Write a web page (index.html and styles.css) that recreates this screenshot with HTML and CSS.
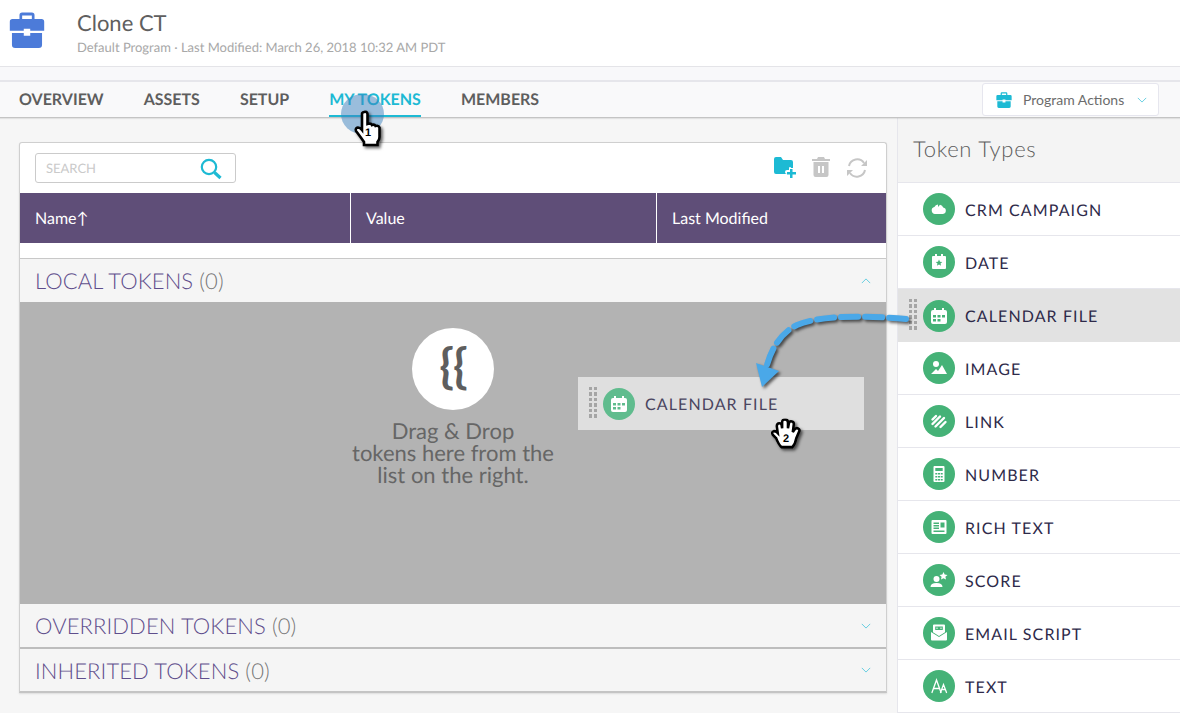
FILE: index.html
```html
<!DOCTYPE html>
<html lang="en">
<head>
  <meta charset="UTF-8">
  <title>Clone CT</title>
  <link rel="stylesheet" href="styles.css">
</head>
<body>

  <svg class="defs" width="0" height="0">
    <symbol id="case" viewBox="2 1.500 32 33.500">
      <path d="M11 8V4.500Q11 2 13.500 2h9Q25 2 25 4.500V8h-2.500V4.700h-9V8z"/>
      <path d="M2 10.500Q2 8 4.500 8h27Q34 8 34 10.500V19H21v-2h-6v2H2z"/>
      <path d="M4 21h11v2.500h6V21h11v11q0 3-3 3H7q-3 0-3-3z"/>
    </symbol>
    <symbol id="cal" viewBox="0 0 20 20">
      <path fill-rule="evenodd" d="M4 4h1V2h2v2h6V2h2v2h1q2 0 2 2v10q0 2-2 2H4q-2 0-2-2V6q0-2 2-2zm0 5v2.500h3V9zm4.500 0v2.500h3V9zm4.500 0v2.500h3V9zm-9 4v2.500h3V13zm4.500 0v2.500h3V13z"/>
    </symbol>
    <symbol id="hand" viewBox="0 0 30 38">
      <path d="M10 2q3-1 3.500 2v10l1.500-.5q2.500 0 3 1.500 2.500-1 3.500 1 3-1 4 1.500V27q0 3-2 5v3H10v-3q-2-3-5-7l-3-4q-1-3 2-3.500 2 0 4 2.500V4q0-1.500 2-2z"/>
    </symbol>
    <symbol id="palm" viewBox="0 0 34 34">
      <path d="M6 20l-3-3q-2-3 1-4 2 0 3 1l1 1-1-7q0-3 2.500-3T12 7l.5 3V4q0-3 3-3t3 3v6l1-5q.5-2.500 3-2 2.500.5 2 3l-1 8 2-3q2-2 3.500-.5 2 1 1 3l-3 7q-1 6-4 9H12q-3-2-6-10z"/>
    </symbol>
  </svg>

  <header class="top">
    <svg class="top-icon"><use href="#case"/></svg>
    <div>
      <h1>Clone CT</h1>
      <p>Default Program · Last Modified: March 26, 2018 10:32 AM PDT</p>
    </div>
  </header>

  <div class="strip"></div>

  <nav class="tabs">
    <a>OVERVIEW</a>
    <a>ASSETS</a>
    <a>SETUP</a>
    <a class="active">MY TOKENS</a>
    <a>MEMBERS</a>
    <button class="actions">
      <svg class="actions-icon"><use href="#case"/></svg>
      Program Actions
      <svg class="chev" viewBox="0 0 12 7"><path d="M1 1l5 5 5-5"/></svg>
    </button>
  </nav>

  <main class="main">
    <section class="content">
      <div class="card">
        <div class="toolbar">
          <div class="search">
            <span>SEARCH</span>
            <svg viewBox="0 0 22 22" width="22" height="22"><circle cx="9" cy="9" r="7.200"/><path d="M14.500 14.500l6 5.500"/></svg>
          </div>
          <div class="tools">
            <svg viewBox="0 0 22 21" width="22" height="21"><path class="blue" d="M0 2q0-2 2-2h5l2 3h8q2 0 2 2v6h-2a1 1 0 0 0-2 0v2h-2a2 2 0 0 0 0 4H2q-2 0-2-2z"/><path class="blue" d="M16 12h2.500v3H22v2.500h-3.500V21H16v-3.500h-3V15h3z"/></svg>
            <svg viewBox="0 0 18 20" width="18" height="20"><path class="grey" d="M0 2h5l1-2h6l1 2h5v2H0z"/><path class="grey" d="M1.500 5h15v13q0 2-2 2h-11q-2 0-2-2zM6 9v7h2V9zm4 0v7h2V9z" fill-rule="evenodd"/></svg>
            <svg class="refresh" viewBox="0 0 22 22" width="22" height="22"><path d="M3 9a8.300 8.300 0 0 1 15-3"/><path d="M19 13a8.300 8.300 0 0 1-15 3"/><path class="grey" d="M21 3v6h-6zM1 19v-6h6z"/></svg>
          </div>
        </div>

        <div class="thead">
          <div class="th th-name">Name<span class="sort">↑</span></div>
          <div class="th th-value">Value</div>
          <div class="th th-date">Last Modified</div>
        </div>
        <div class="spacer"></div>

        <div class="group">
          <h2>LOCAL TOKENS <span>(0)</span></h2>
          <svg class="chev" viewBox="0 0 12 7"><path d="M1 6l5-5 5 5"/></svg>
        </div>
        <div class="drop">
          <div class="braces">{{</div>
          <p>Drag &amp; Drop<br>tokens here from the<br>list on the right.</p>
        </div>
        <div class="group">
          <h2>OVERRIDDEN TOKENS <span>(0)</span></h2>
          <svg class="chev" viewBox="0 0 12 7"><path d="M1 1l5 5 5-5"/></svg>
        </div>
        <div class="group group-last">
          <h2>INHERITED TOKENS <span>(0)</span></h2>
          <svg class="chev" viewBox="0 0 12 7"><path d="M1 1l5 5 5-5"/></svg>
        </div>
      </div>
    </section>

    <aside class="side">
      <h3>Token Types</h3>
      <ul class="types">
        <li><span class="dot"><svg viewBox="0 0 20 20"><path d="M6 15a3.500 3.500 0 0 1-.6-6.900A4.500 4.500 0 0 1 9 5.500V8l2-2.300a4 4 0 0 1 3.200 2.800A3.300 3.300 0 0 1 14 15z"/></svg></span>CRM CAMPAIGN</li>
        <li><span class="dot"><svg viewBox="0 0 20 20"><path fill-rule="evenodd" d="M4 4h2V2h2v2h4V2h2v2h2q1 0 1 1v11q0 1-1 1H4q-1 0-1-1V5q0-1 1-1zm6 3.500l-1 2.200-2.300.2 1.800 1.600-.6 2.300 2.100-1.200 2.100 1.200-.6-2.300 1.800-1.600-2.300-.2z"/></svg></span>DATE</li>
        <li class="picked"><span class="grip"></span><span class="dot"><svg viewBox="0 0 20 20"><use href="#cal"/></svg></span>CALENDAR FILE</li>
        <li><span class="dot"><svg viewBox="0 0 20 20"><circle cx="7" cy="6" r="3"/><path d="M2 16l5-5 2 2 4-6 5 9z"/></svg></span>IMAGE</li>
        <li><span class="dot"><svg class="line-icon" viewBox="0 0 20 20"><path d="M3.500 13L11 5.500"/><path d="M6.500 15.500L15 7"/><path d="M11.500 16l5-5"/><path d="M3.500 8.500L7 5"/></svg></span>LINK</li>
        <li><span class="dot"><svg viewBox="0 0 20 20"><path fill-rule="evenodd" d="M5.500 2h9q1 0 1 1v14q0 1-1 1h-9q-1 0-1-1V3q0-1 1-1zm.8 2v3h7.400V4zm0 5v1.500h2V9zm2.700 0v1.500h2V9zm2.700 0v1.500h2V9zm-5.400 3v1.500h2V12zm2.700 0v1.500h2V12zm2.700 0v1.500h2V12zm-5.400 3v1.500h2V15zm2.700 0v1.500h2V15zm2.700 0v1.500h2V15z"/></svg></span>NUMBER</li>
        <li><span class="dot"><svg viewBox="0 0 20 20"><path fill-rule="evenodd" d="M3.500 3h13q1 0 1 1v12q0 1-1 1h-13q-1 0-1-1V4q0-1 1-1zm1 2.500V7H10V5.500zm0 2.500v1.500H10V8zm0 2.500V12H10v-1.500zm7-5v5h4v-5zm-7 8V15h11v-1.500z"/></svg></span>RICH TEXT</li>
        <li><span class="dot"><svg viewBox="0 0 20 20"><circle cx="7.500" cy="9" r="3"/><path d="M1.500 17q0-4 6-4t6 4zM14.500 2l1.200 2.600 2.800.3-2.100 1.900.6 2.800-2.500-1.400-2.500 1.400.6-2.800-2.100-1.900 2.800-.3z"/></svg></span>SCORE</li>
        <li><span class="dot"><svg viewBox="0 0 20 20"><path fill-rule="evenodd" d="M5 1.500h10q1 0 1 1V9.300l-6 3.700-6-3.700V2.500q0-1 1-1zm1.200 2V7h7.600V3.500zM2 9l8 5 8-5v7.500q0 1-1 1H3q-1 0-1-1z"/><path d="M7.500 4.500h1v1.500h-1zM11.500 4.500h1v1.500h-1z"/></svg></span>EMAIL SCRIPT</li>
        <li><span class="dot"><svg class="line-icon thin" viewBox="0 0 20 20"><path d="M3 16.500L7.500 4 12 16.500M4.800 12.500h5.400"/><path d="M11.500 16.500L14.500 8.500 17.500 16.500M12.700 13.500h3.600"/></svg></span>TEXT</li>
      </ul>
    </aside>
  </main>

  <div class="ghost">
    <span class="grip"></span>
    <span class="dot"><svg viewBox="0 0 20 20"><use href="#cal"/></svg></span>
    CALENDAR FILE
  </div>

  <div class="spot"></div>

  <svg class="arrow" viewBox="0 0 170 90" width="170" height="90">
    <path d="M154 14C120 11 72 9 45 20C30 27 20 42 15 60"/>
    <path class="head" d="M10 82L4 58l23 8z"/>
  </svg>

  <div class="cursor cursor-one">
    <svg viewBox="0 0 30 38"><use href="#hand"/></svg>
    <span>1</span>
  </div>
  <div class="cursor cursor-two">
    <svg viewBox="0 0 34 34"><use href="#palm"/></svg>
    <span>2</span>
  </div>

</body>
</html>
```

FILE: styles.css
```css
* {
  box-sizing: border-box;
}

html, body {
  margin: 0;
  height: 713px;
  overflow: hidden;
}

body {
  font-family: Lato, "Open Sans", sans-serif;
  text-rendering: geometricPrecision;
  background: #f6f6f6;
  color: #5c5c5c;
  position: relative;
}

.defs {
  position: absolute;
}

.top {
  height: 67px;
  background: #fff;
  border-bottom: 1px solid #e4e4e8;
  display: flex;
  padding: 12px 0 0 9px;
}

.top-icon {
  width: 36px;
  height: 36px;
  fill: #4c7bd9;
  margin-right: 32px;
}

.top h1 {
  margin: 0;
  font-size: 22px;
  font-weight: 400;
  line-height: 22px;
  color: #5f5f5f;
}

.top p {
  margin: 6px 0 0;
  font-size: 13px;
  line-height: 15px;
  color: #a8a8a8;
}

.strip {
  height: 13px;
  background: #f8f8fa;
}

.tabs {
  height: 38px;
  background: #f9f9fa;
  border-top: 2px solid #e6e6eb;
  border-bottom: 1px solid #c4c4c4;
  box-shadow: 0 1px 1px rgba(0, 0, 0, .08);
  display: flex;
  padding-left: 19px;
  gap: 40px;
  position: relative;
}

.tabs a {
  font-size: 16px;
  font-weight: 700;
  color: #5e5e5e;
  line-height: 35px;
  height: 35px;
}

.tabs .active {
  color: #1dbad4;
  border-bottom: 2px solid #1dbad4;
}

.actions {
  position: absolute;
  right: 21px;
  top: 1px;
  width: 177px;
  height: 33px;
  background: #fff;
  border: 1px solid #e6e6ee;
  border-radius: 3px;
  font: 400 14px Lato, sans-serif;
  color: #6c6c6c;
  display: flex;
  align-items: center;
  padding: 0 0 0 13px;
}

.actions-icon {
  width: 16px;
  height: 16px;
  fill: #1dbad4;
  margin-right: 11px;
}

.actions .chev {
  margin-left: 13px;
}

.chev {
  width: 10px;
  height: 6px;
  fill: none;
  stroke: #4cc6dc;
  stroke-width: 1;
}

.main {
  display: flex;
  height: 595px;
}

.content {
  width: 897px;
  padding: 24px 10px 0 19px;
}

.card {
  height: 551px;
  background: #fff;
  border: 1px solid #cfcfcf;
  border-bottom: 2px solid #c4c4c4;
  border-radius: 3px 3px 0 0;
  box-shadow: 0 1px 2px rgba(0, 0, 0, .1);
}

.toolbar {
  height: 50px;
  display: flex;
  justify-content: space-between;
  padding: 10px 18px 0 15px;
}

.search {
  width: 201px;
  height: 30px;
  border: 1px solid #cbcbcb;
  border-radius: 3px;
  display: flex;
  justify-content: space-between;
  align-items: center;
  padding: 0 13px 0 10px;
  font-size: 13px;
  color: #cacaca;
}

.search svg {
  fill: none;
  stroke: #1dbad4;
  stroke-width: 2.200;
  margin-top: 1px;
}

.search path {
  stroke-width: 3.200;
}

.tools {
  display: flex;
  gap: 16px;
  padding-top: 4px;
}

.tools svg {
  flex: none;
}

.tools .blue {
  fill: #1dbad4;
}

.tools .grey {
  fill: #c6c6c6;
  stroke: none;
}

.refresh {
  fill: none;
  stroke: #c6c6c6;
  stroke-width: 2;
}

.thead {
  height: 50px;
  background: #5f4e78;
  display: flex;
  color: #fff;
  font-size: 16px;
  line-height: 52px;
}

.th {
  padding-left: 15px;
  border-right: 1px solid #fff;
}

.th-name {
  width: 331px;
}

.th-value {
  width: 306px;
}

.th-date {
  flex: 1;
  border-right: 0;
}

.spacer {
  height: 16px;
  background: #fff;
  border-bottom: 1px solid #c8c8c8;
}

.group {
  height: 43px;
  background: #f5f5f5;
  display: flex;
  justify-content: space-between;
  align-items: center;
  padding: 0 15px;
}

.group h2 {
  margin: 0;
  font-size: 22px;
  font-weight: 300;
  color: #5f4e8c;
  letter-spacing: .1px;
}

.group h2 span {
  color: #777;
}

.group-last {
  border-top: 2px solid #bdbdbd;
  height: 44px;
}

.drop {
  height: 302px;
  background: #b3b3b3;
  display: flex;
  flex-direction: column;
  align-items: center;
  padding-top: 26px;
}

.drop p {
  margin: 10px 0 0;
  font-size: 22px;
  line-height: 22px;
  text-align: center;
  color: #666;
}

.braces {
  width: 82px;
  height: 82px;
  flex: none;
  border-radius: 50%;
  background: #fff;
  color: #5e5e5e;
  font: 700 48px/76px Lato, sans-serif;
  text-align: center;
  letter-spacing: -1px;
}

.side {
  flex: 1;
  background: #fff;
  border-left: 1px solid #e6e6ec;
}

.side h3 {
  margin: 0;
  height: 65px;
  background: #f4f4f4;
  border-bottom: 1px solid #e6e6ec;
  font-size: 22px;
  font-weight: 300;
  color: #5c5c5c;
  padding: 15px 0 0 15px;
  line-height: 32px;
  letter-spacing: .7px;
}

.types {
  list-style: none;
  margin: 0;
  padding: 0;
}

.types li {
  height: 53px;
  border-bottom: 1px solid #e6e6ec;
  display: flex;
  align-items: center;
  padding: 2px 0 0 25px;
  font-size: 16px;
  letter-spacing: 1.100px;
  color: #2e2a4a;
  position: relative;
}

.types .picked {
  background: #e2e2e2;
  border-bottom: 0;
}

.dot {
  width: 32px;
  height: 32px;
  flex: none;
  border-radius: 50%;
  background: #45b277;
  margin: -2px 10px 0 0;
  display: flex;
  align-items: center;
  justify-content: center;
}

.dot svg {
  width: 20px;
  height: 20px;
  fill: #fff;
}

.dot .line-icon {
  fill: none;
  stroke: #fff;
  stroke-width: 2.400;
  stroke-linecap: round;
}

.dot .thin {
  stroke-width: 1.300;
}

.grip {
  position: absolute;
  left: 11px;
  top: 10px;
  width: 8px;
  height: 33px;
  background: linear-gradient(to right, #a5a5a5 3px, transparent 3px 5px, #a5a5a5 5px);
  -webkit-mask-image: repeating-linear-gradient(to bottom, #000 0 3.500px, transparent 3.500px 5.500px);
  mask-image: repeating-linear-gradient(to bottom, #000 0 3.500px, transparent 3.500px 5.500px);
}

.ghost {
  position: absolute;
  left: 578px;
  top: 377px;
  width: 286px;
  height: 53px;
  background: #dfdfdf;
  display: flex;
  align-items: center;
  padding: 2px 0 0 25px;
  font-size: 16px;
  letter-spacing: 1.100px;
  color: #4a4560;
}

.ghost .dot {
  background: #60bc8e;
}

.spot {
  position: absolute;
  left: 341px;
  top: 94px;
  width: 43px;
  height: 40px;
  border-radius: 50%;
  background: rgba(60, 130, 190, .5);
}

.arrow {
  position: absolute;
  left: 752px;
  top: 305px;
  overflow: visible;
  filter: drop-shadow(2px 2px 1.500px rgba(0, 0, 0, .6));
}

.arrow path {
  fill: none;
  stroke: #4aa8e8;
  stroke-width: 6;
  stroke-dasharray: 17 7;
  stroke-linecap: round;
}

.arrow .head {
  fill: #4aa8e8;
  stroke: none;
}

.cursor {
  position: absolute;
  width: 30px;
  height: 38px;
}

.cursor svg {
  width: 100%;
  height: 100%;
  fill: #fff;
  stroke: #000;
  stroke-width: 2.600;
  filter: drop-shadow(2px 2px 1.500px rgba(0, 0, 0, .6));
}

.cursor span {
  position: absolute;
  font: 700 11px "Liberation Sans", sans-serif;
  color: #000;
}

.cursor-one {
  left: 354px;
  top: 110px;
}

.cursor-one span {
  left: 11px;
  top: 17px;
}

.cursor-two {
  left: 770px;
  top: 418px;
  width: 33px;
  height: 34px;
}

.cursor-two span {
  left: 13px;
  top: 15px;
}
```
